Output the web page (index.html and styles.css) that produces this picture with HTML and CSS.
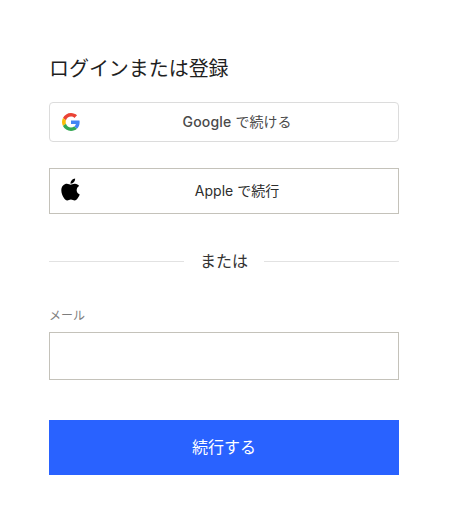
FILE: index.html
```html
<!DOCTYPE html>
<html lang="ja">
<head>
<meta charset="utf-8">
<title>ログインまたは登録</title>
<link rel="stylesheet" href="styles.css">
</head>
<body>
<main class="card">
  <h1 class="title">ログインまたは登録</h1>
  <button class="btn google" type="button">
    <svg class="icon g-icon" viewBox="0 0 48 48" aria-hidden="true">
      <path fill="#EA4335" d="M24 9.5c3.54 0 6.71 1.22 9.21 3.6l6.85-6.85C35.9 2.38 30.47 0 24 0 14.62 0 6.51 5.38 2.56 13.22l7.98 6.19C12.43 13.72 17.74 9.5 24 9.5z"/>
      <path fill="#4285F4" d="M46.98 24.55c0-1.57-.15-3.09-.38-4.55H24v9.02h12.94c-.58 2.96-2.26 5.48-4.78 7.18l7.73 6c4.51-4.18 7.09-10.36 7.09-17.65z"/>
      <path fill="#FBBC05" d="M10.53 28.59c-.48-1.45-.76-2.99-.76-4.59s.27-3.14.76-4.59l-7.98-6.19C.92 16.46 0 20.12 0 24c0 3.88.92 7.54 2.56 10.78l7.97-6.19z"/>
      <path fill="#34A853" d="M24 48c6.48 0 11.93-2.13 15.89-5.81l-7.73-6c-2.15 1.45-4.92 2.3-8.16 2.3-6.26 0-11.57-4.22-13.47-9.91l-7.98 6.19C6.51 42.62 14.62 48 24 48z"/>
    </svg>
    <span class="btn-label"><span class="brand">Google</span> で続ける</span>
  </button>
  <button class="btn apple" type="button">
    <svg class="icon a-icon" viewBox="0 0 384 512" aria-hidden="true">
      <path fill="#000" d="M318.7 268.7c-.2-36.7 16.4-64.4 50-84.8-18.8-26.9-47.2-41.7-84.7-44.6-35.5-2.8-74.3 20.7-88.5 20.7-15 0-49.4-19.7-76.4-19.7C63.3 141.2 4 184.8 4 273.5q0 39.3 14.4 81.2c12.8 36.7 59 126.7 107.2 125.2 25.2-.6 43-17.9 75.8-17.9 31.8 0 48.3 17.9 76.4 17.9 48.6-.7 90.4-82.5 102.6-119.3-65.2-30.7-61.7-90-61.7-91.9zm-56.6-164.2c27.3-32.4 24.8-61.9 24-72.5-24.1 1.4-52 16.4-67.9 34.9-17.5 19.8-27.8 44.3-25.6 71.9 26.1 2 49.9-11.4 69.5-34.3z"/>
    </svg>
    <span class="btn-label">Apple で続行</span>
  </button>
  <div class="divider"><span class="divider-text">または</span></div>
  <label class="field-label" for="email">メール</label>
  <input class="field" id="email" type="email">
  <button class="submit" type="button">続行する</button>
</main>
</body>
</html>
```
FILE: styles.css
```css
* { box-sizing: border-box; }
html, body { margin: 0; padding: 0; background: #fff; }
body {
  font-family: Inter, "Noto Sans CJK JP", sans-serif;
  color: #2d2d2d;
}
.card {
  width: 350px;
  margin-left: 49px;
  padding-top: 54px;
  display: flex;
  flex-direction: column;
}
.title {
  margin: 0 0 20px;
  font-size: 20px;
  line-height: 28px;
  font-weight: 400;
  color: #1f1f1f;
  font-family: "Noto Sans CJK JP", sans-serif;
  letter-spacing: -0.05px;
}
.btn {
  display: flex;
  align-items: center;
  justify-content: center;
  position: relative;
  width: 100%;
  padding: 0 0 2px 26px;
  background: #fff;
  font-size: 14px;
  font-family: inherit;
  font-weight: 400;
}
.icon { position: absolute; }
.google {
  height: 40px;
  border: 1px solid #dcdcdc;
  border-radius: 4px;
  color: #4a4a4a;
  margin-bottom: 26px;
}
.brand { font-weight: 500; letter-spacing: 0.2px; }
.g-icon { left: 12px; top: 10px; width: 18px; height: 18px; }
.apple {
  height: 46px;
  border: 1px solid #c4c2ba;
  color: #2d2d2d;
  margin-bottom: 36px;
}
.a-icon { left: 11px; top: 8px; width: 19px; height: 25px; }
.divider {
  display: flex;
  align-items: center;
  justify-content: center;
  gap: 16px;
  height: 22px;
  font-size: 16px;
  color: #333;
  margin-bottom: 35px;
}
.divider-text { padding-bottom: 3px; }
.divider::before, .divider::after {
  content: "";
  flex: 1;
  height: 1px;
  background: #e2e2e2;
}
.field-label {
  font-size: 12px;
  line-height: 18px;
  color: #7d7d7d;
  margin-bottom: 7px;
}
.field {
  height: 48px;
  width: 100%;
  border: 1px solid #c4c2ba;
  background: #fff;
  padding: 0 12px;
  margin: 0 0 40px;
}
.submit {
  height: 55px;
  width: 100%;
  border: 0;
  padding: 0 0 3px;
  background: #2962ff;
  color: #fff;
  font-size: 16px;
  font-family: inherit;
}
```
